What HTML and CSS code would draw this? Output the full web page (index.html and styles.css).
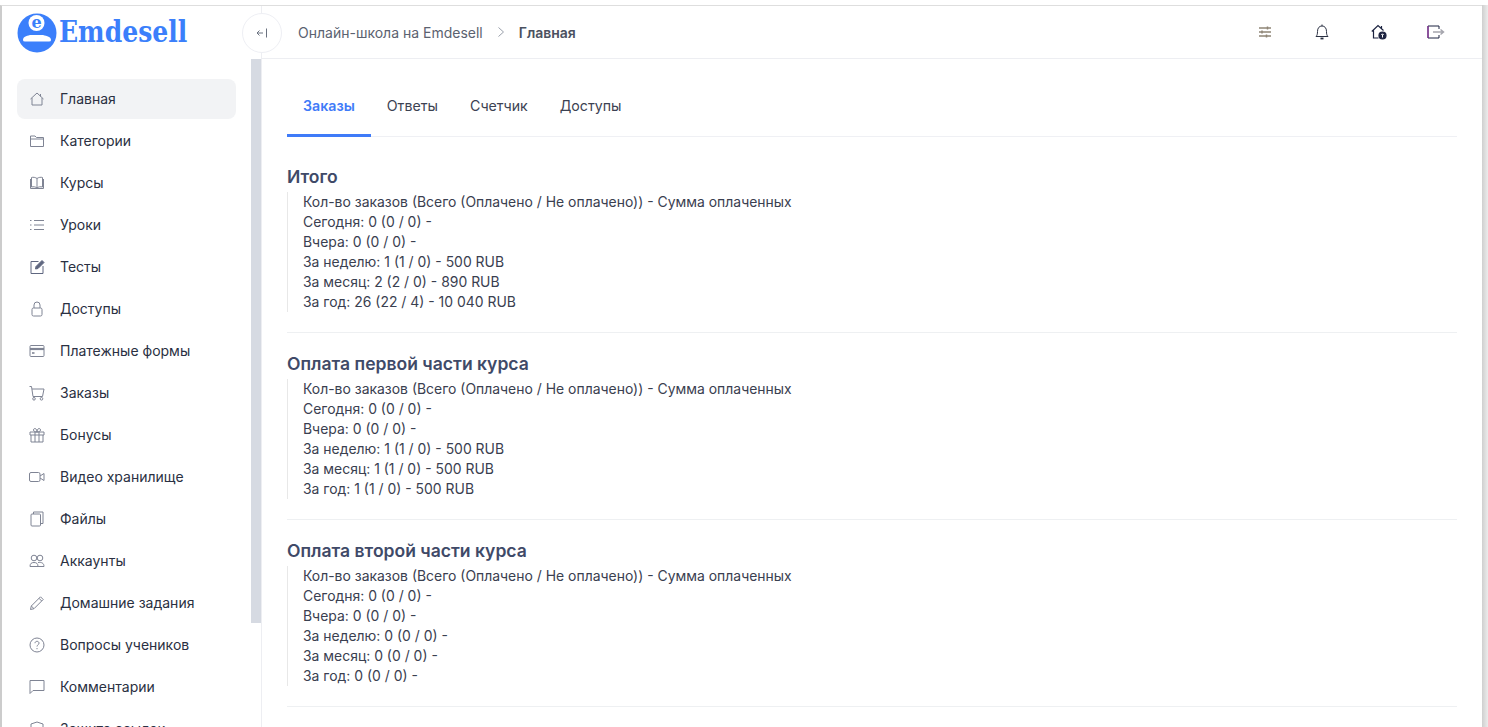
FILE: index.html
```html
<!DOCTYPE html>
<html lang="ru">
<head>
<meta charset="utf-8">
<title>Emdesell</title>
<link rel="stylesheet" href="styles.css">
</head>
<body>
<div class="frame">
  <aside class="sidebar">
    <div class="logo">
      <svg class="logo-mark" width="40" height="40" viewBox="0 0 40 40"><circle cx="20" cy="20" r="19.500" fill="#3b7ffb"/><circle cx="19.500" cy="10" r="8" fill="#fff"/><path d="M6 27c0-3 3-4 7-5h13c4 1 8 2 8 5q0 1.500-2 1.500H8q-2 0-2-1.500z" fill="#fff"/><text class="logo-e" x="19.500" y="14.500" text-anchor="middle">e</text></svg>
      <span class="logo-text">Emdesell</span>
    </div>
    <div class="side-body">
      <nav class="menu">
        <a class="item active"><svg class="ic" viewBox="0 0 16 16"><path d="M1.500 8 8 2l6.500 6M3 7v7h10V7M11.500 3v2.500"/></svg><span>Главная</span></a>
        <a class="item"><svg class="ic" viewBox="0 0 16 16"><path d="M1.500 13.500V3h4.500l1.500 1.500h7v9zM1.500 6h13"/></svg><span>Категории</span></a>
        <a class="item"><svg class="ic" viewBox="0 0 16 16"><path d="M8 3.500C6.500 2.300 4 2 2.500 2.500v9.500c2-.5 4.300-.2 5.500 1 1.200-1.200 3.500-1.500 5.500-1V2.500C12 2 9.500 2.300 8 3.500zM8 3.500V13M1.500 4v9.500h13V4"/></svg><span>Курсы</span></a>
        <a class="item"><svg class="ic" viewBox="0 0 16 16"><path d="M5 3.500h10M5 8h10M5 12.500h10M1 3.500h1.500M1 8h1.500M1 12.500h1.500"/></svg><span>Уроки</span></a>
        <a class="item"><svg class="ic" viewBox="0 0 16 16"><path d="M9.500 2.500H2v12h12V7" stroke="#5f6780"/><path d="M6.500 10l.5-2.500L13 1.500l2 2-6 6z" fill="#5f6780" stroke="#5f6780"/></svg><span>Тесты</span></a>
        <a class="item"><svg class="ic" viewBox="0 0 16 16"><rect x="3" y="7" width="10" height="8" rx="1.500"/><path d="M5 7V4a3 3 0 0 1 6 0v3"/></svg><span>Доступы</span></a>
        <a class="item"><svg class="ic" viewBox="0 0 16 16"><rect x="1" y="2.500" width="14" height="11" rx="1"/><path d="M1 6h14" stroke-width="2.200"/><path d="M3 10h2.500" stroke-width="1.600"/></svg><span>Платежные формы</span></a>
        <a class="item"><svg class="ic" viewBox="0 0 16 16"><path d="M.5 1.500h2l1.500 10h9.500L15 4H3"/><circle cx="5" cy="13.800" r="1.300"/><circle cx="12.500" cy="13.800" r="1.300"/></svg><span>Заказы</span></a>
        <a class="item"><svg class="ic" viewBox="0 0 16 16"><path d="M1 5h14v3H1zM2 8v7h12V8M6 5v10M10 5v10M8 5C6.500 5 4.500 4.500 4.500 3S6 1 7 2s1 3 1 3 0-2 1-3 2.500-.5 2.500 1S9.500 5 8 5z"/></svg><span>Бонусы</span></a>
        <a class="item"><svg class="ic" viewBox="0 0 16 16"><rect x=".5" y="3.500" width="10.500" height="9" rx="1.500"/><path d="M11 7l4-2.500v7L11 9"/></svg><span>Видео хранилище</span></a>
        <a class="item"><svg class="ic" viewBox="0 0 16 16"><rect x="2" y="3" width="9.500" height="12" rx="1"/><path d="M4.500 3V1h9.500v11.500h-2.500"/></svg><span>Файлы</span></a>
        <a class="item"><svg class="ic" viewBox="0 0 16 16"><circle cx="5" cy="5" r="2.800"/><circle cx="11" cy="5" r="2.800"/><path d="M1 13.500c0-3 1.500-4 4-4s4 1 4 4zM9 9.500c3.500-.5 6 .5 6 4h-6"/></svg><span>Аккаунты</span></a>
        <a class="item"><svg class="ic" viewBox="0 0 16 16"><path d="M1.500 14.500l.8-3.500L11.500 1.800l2.700 2.700L5 13.700zM2.300 11l2.700 2.700M10 3.300l2.700 2.700"/></svg><span>Домашние задания</span></a>
        <a class="item"><svg class="ic" viewBox="0 0 16 16"><circle cx="8" cy="8" r="7"/><path d="M6 6.200C6 5 7 4.300 8 4.300s2 .7 2 1.900c0 1.600-2 1.600-2 3.300M8 11v1.200"/></svg><span>Вопросы учеников</span></a>
        <a class="item"><svg class="ic" viewBox="0 0 16 16"><path d="M1 1.500h14v10H4l-3 3z"/></svg><span>Комментарии</span></a>
        <a class="item"><svg class="ic" viewBox="0 0 16 16"><path d="M8 1l6 2v5c0 3.500-3 6-6 7-3-1-6-3.500-6-7V3z"/></svg><span>Защита ссылок</span></a>
      </nav>
      <div class="thumb"></div>
    </div>
  </aside>
  <main class="main">
    <header class="topbar">
      <button class="collapse"><svg width="12" height="12" viewBox="0 0 12 12" fill="none" stroke="#6b7280" stroke-width="1"><path d="M7 6H1M3.500 3.500 1 6l2.500 2.500M10.500 1.500v9"/></svg></button>
      <div class="crumbs">
        <span>Онлайн-школа на Emdesell</span>
        <svg class="chev" width="8" height="12" viewBox="0 0 8 12" fill="none" stroke="#9aa0ab" stroke-width="1"><path d="M1.500 1.500 6.500 6l-5 4.500"/></svg>
        <strong>Главная</strong>
      </div>
      <div class="tools">
        <svg width="14" height="14" viewBox="0 0 14 14" fill="none" stroke="#8f8576" stroke-width="1.500"><path d="M1 3h12M1 7h12M1 11h12M9.500 1.500v3M4 5.500v3M8.500 9.500v3"/></svg>
        <svg width="14" height="16" viewBox="0 0 14 16" fill="none" stroke="#2a3042" stroke-width="1"><path d="M1 12.500c1.200-1.200 1.500-2.500 1.500-5C2.500 4 4.300 2 7 2s4.500 2 4.500 5.500c0 2.500.3 3.800 1.500 5z"/><path d="M7 .5V2"/><path d="M5.500 14.500h3" stroke-width="1.800"/></svg>
        <svg width="16" height="16" viewBox="0 0 16 16" fill="none" stroke="#1c2340" stroke-width="1.200"><path d="M.8 7.500 7 1.500l5.500 5M2.500 6.500v7.500h5M10.500 2v2.500"/><circle cx="11.500" cy="11.500" r="3.500" fill="#1c2340"/><path d="M11.500 13.500v-3M10.300 11 11.500 9.800 12.700 11" stroke="#fff" stroke-width="1"/></svg>
        <svg width="18" height="14" viewBox="0 0 18 14" fill="none" stroke="#1c2340" stroke-width="1"><path d="M12 4V1H1v12h11v-3"/><path d="M1 1v12" stroke="#8a2a9a" stroke-width="1.200"/><path d="M6 7h10M13.500 4.500 16.500 7l-3 2.500" stroke="#a5a5ad" stroke-width="1.500"/></svg>
      </div>
    </header>
    <section class="content">
      <div class="tabs">
        <a class="tab current">Заказы</a>
        <a class="tab">Ответы</a>
        <a class="tab">Счетчик</a>
        <a class="tab">Доступы</a>
      </div>
      <article class="group">
        <h3>Итого</h3>
        <div class="stats">
          <div>Кол-во заказов (Всего (Оплачено / Не оплачено)) - Сумма оплаченных</div>
          <div>Сегодня: 0 (0 / 0) -</div>
          <div>Вчера: 0 (0 / 0) -</div>
          <div>За неделю: 1 (1 / 0) - 500 RUB</div>
          <div>За месяц: 2 (2 / 0) - 890 RUB</div>
          <div>За год: 26 (22 / 4) - 10 040 RUB</div>
        </div>
      </article>
      <article class="group">
        <h3>Оплата первой части курса</h3>
        <div class="stats">
          <div>Кол-во заказов (Всего (Оплачено / Не оплачено)) - Сумма оплаченных</div>
          <div>Сегодня: 0 (0 / 0) -</div>
          <div>Вчера: 0 (0 / 0) -</div>
          <div>За неделю: 1 (1 / 0) - 500 RUB</div>
          <div>За месяц: 1 (1 / 0) - 500 RUB</div>
          <div>За год: 1 (1 / 0) - 500 RUB</div>
        </div>
      </article>
      <article class="group">
        <h3>Оплата второй части курса</h3>
        <div class="stats">
          <div>Кол-во заказов (Всего (Оплачено / Не оплачено)) - Сумма оплаченных</div>
          <div>Сегодня: 0 (0 / 0) -</div>
          <div>Вчера: 0 (0 / 0) -</div>
          <div>За неделю: 0 (0 / 0) -</div>
          <div>За месяц: 0 (0 / 0) -</div>
          <div>За год: 0 (0 / 0) -</div>
        </div>
      </article>
    </section>
  </main>
</div>
</body>
</html>
```
FILE: styles.css
```css
* { box-sizing: border-box; }
html, body { margin: 0; height: 100%; overflow: hidden; }
body {
  font-family: Inter, "Liberation Sans", sans-serif;
  font-size: 14px;
  color: #2a3042;
  padding: 5px 6px 0 0;
  background: #fff linear-gradient(90deg, #cfcfcf, #ececec) no-repeat right 0 top 5px / 6px 100%;
}
.frame {
  display: flex;
  height: 722px;
  background: #fff;
  overflow: hidden;
  border-top: 1px solid #dedede;
  border-left: 2px solid #cccccc;
}
.sidebar {
  width: 260px;
  flex: none;
  border-right: 1px solid #edeef2;
  display: flex;
  flex-direction: column;
  position: relative;
}
.logo {
  height: 53px;
  padding: 7px 0 0 15px;
  display: flex;
  align-items: flex-start;
  gap: 2px;
  flex: none;
}
.logo-mark { flex: none; }
.logo-e {
  font-family: "DejaVu Serif", serif;
  font-weight: 700;
  font-size: 16px;
  fill: #3b7ffb;
}
.logo-text {
  font-family: "DejaVu Serif", serif;
  font-weight: 700;
  font-size: 29px;
  line-height: 38px;
  color: #3b7ffb;
  transform: scaleX(0.865);
  transform-origin: left center;
}
.side-body {
  flex: 1;
  display: flex;
  min-height: 0;
}
.menu {
  width: 249px;
  padding: 20px 15px 0;
  flex: none;
}
.item {
  display: flex;
  align-items: center;
  height: 40px;
  margin-bottom: 2px;
  padding-left: 12px;
  border-radius: 8px;
  color: #2a3042;
}
.item span { margin-top: -2px; }
.item.active { background: #f2f3f5; }
.ic {
  width: 16px;
  height: 16px;
  flex: none;
  margin-right: 15px;
  fill: none;
  stroke: #7f8494;
  stroke-width: 1;
}
.thumb {
  width: 10px;
  height: 564px;
  background: #d6dae2;
  flex: none;
}
.main {
  flex: 1;
  min-width: 0;
  display: flex;
  flex-direction: column;
}
.topbar {
  height: 53px;
  flex: none;
  border-bottom: 1px solid #edeef2;
  display: flex;
  align-items: center;
  position: relative;
  padding-left: 36px;
  padding-right: 18px;
}
.collapse {
  position: absolute;
  left: -20px;
  top: 7px;
  width: 40px;
  height: 40px;
  border-radius: 50%;
  border: 1px solid #eeeff4;
  background: #fff;
  display: flex;
  align-items: center;
  justify-content: center;
  padding: 0;
  z-index: 2;
}
.crumbs {
  display: flex;
  align-items: center;
  gap: 14px;
  font-size: 14px;
  color: #5b6270;
  flex: 1;
}
.crumbs strong { font-weight: 600; color: #4b5160; }
.tools {
  display: grid;
  grid-template-columns: repeat(4, 57px);
  justify-items: center;
  align-items: center;
}
.content {
  flex: 1;
  padding: 27px 25px 0 25px;
}
.tabs {
  display: flex;
  border-bottom: 1px solid #eff0f4;
  height: 51px;
}
.tab {
  padding: 11px 16px 0;
  height: 51px;
  color: #3c4252;
  font-size: 14.200px;
}
.tab.current {
  color: #3f7bf8;
  font-weight: 600;
  border-bottom: 3px solid #3f7bf8;
}
.group {
  padding-top: 29px;
  padding-bottom: 20px;
  border-bottom: 1px solid #eef0f2;
}
.group + .group { padding-top: 20px; }
.group h3 {
  margin: 0;
  font-size: 17.550px;
  font-weight: 600;
  line-height: 21px;
  color: #3f4a68;
}
.stats {
  border-left: 1px solid #e8e8e8;
  padding-left: 15px;
  margin-top: 5px;
  line-height: 20px;
  font-size: 13.950px;
  color: #3a4050;
}
```
